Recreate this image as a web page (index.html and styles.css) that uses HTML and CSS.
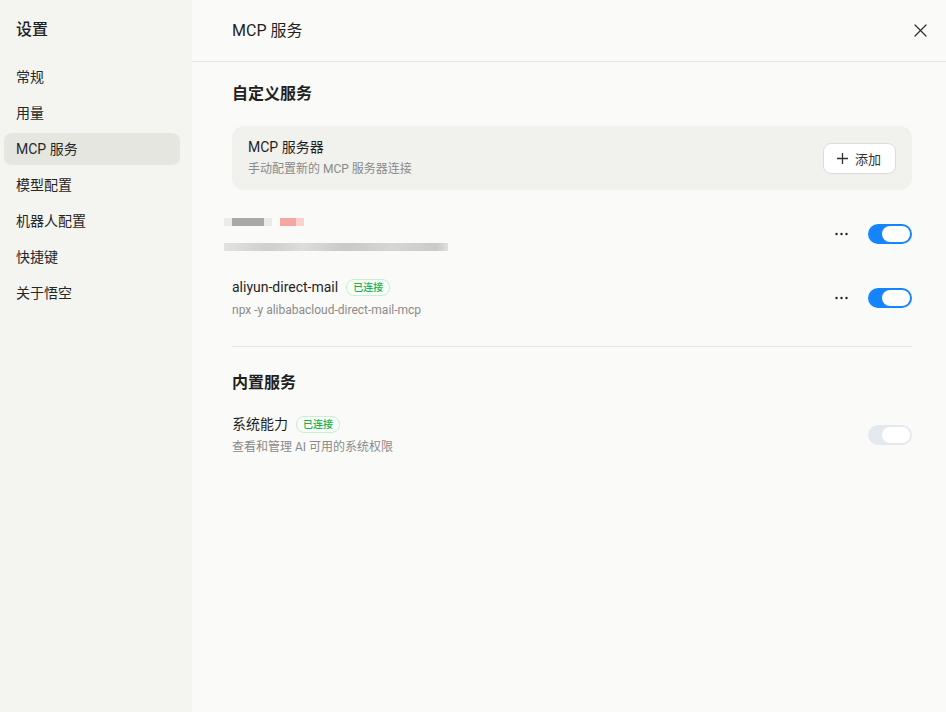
FILE: index.html
```html
<!DOCTYPE html>
<html lang="zh-CN">
<head>
  <meta charset="UTF-8">
  <meta name="viewport" content="width=device-width, initial-scale=1.0">
  <link rel="stylesheet" href="styles.css">
  <title>设置</title>
</head>
<body>
  <aside class="sidebar">
    <h1 class="sidebar-title">设置</h1>
    <nav class="nav">
      <a class="nav-item">常规</a>
      <a class="nav-item">用量</a>
      <a class="nav-item active">MCP 服务</a>
      <a class="nav-item">模型配置</a>
      <a class="nav-item">机器人配置</a>
      <a class="nav-item">快捷键</a>
      <a class="nav-item">关于悟空</a>
    </nav>
  </aside>

  <main class="main">
    <header class="header">
      <h2>MCP 服务</h2>
      <button class="close" aria-label="关闭">
        <svg width="13" height="13" viewBox="0 0 13 13" fill="none" stroke="#333" stroke-width="1.3" stroke-linecap="round">
          <path d="M1 1l11 11M12 1L1 12"/>
        </svg>
      </button>
    </header>

    <div class="content">
      <h3 class="section-title">自定义服务</h3>

      <div class="card">
        <div>
          <div class="card-title">MCP 服务器</div>
          <div class="card-desc">手动配置新的 MCP 服务器连接</div>
        </div>
        <button class="add-btn">
          <svg width="11" height="11" viewBox="0 0 11 11" stroke="#333" stroke-width="1.3">
            <path d="M5.5 0v11M0 5.5h11"/>
          </svg>
          添加
        </button>
      </div>

      <div class="server">
        <div class="blurred">
          <div class="blur-line">
            <span class="px" style="width:8px;background:#ebebeb"></span>
            <span class="px" style="width:32px;background:#a9a9a9"></span>
            <span class="px" style="width:8px;background:#eaeaea"></span>
            <span class="px" style="width:8px;background:transparent"></span>
            <span class="px" style="width:16px;background:#f6a7a4"></span>
            <span class="px" style="width:8px;background:#fbd1cf"></span>
          </div>
          <div class="blur-line low">
            <span class="px" style="width:224px;background:linear-gradient(90deg,#e2e2e2,#cfcfcf 20%,#dcdcdc 35%,#c9c9c9 55%,#d6d6d6 75%,#cacaca 95%,#e0e0e0)"></span>
          </div>
        </div>
        <div class="actions">
          <svg class="more" width="13" height="4" viewBox="0 0 13 4" fill="#222">
            <circle cx="1.5" cy="2" r="1.2"/>
            <circle cx="6.5" cy="2" r="1.2"/>
            <circle cx="11.5" cy="2" r="1.2"/>
          </svg>
          <span class="toggle on"><span class="knob"></span></span>
        </div>
      </div>

      <div class="server">
        <div class="server-text">
          <div class="server-name">aliyun-direct-mail <span class="badge">已连接</span></div>
          <div class="server-cmd">npx -y alibabacloud-direct-mail-mcp</div>
        </div>
        <div class="actions">
          <svg class="more" width="13" height="4" viewBox="0 0 13 4" fill="#222">
            <circle cx="1.5" cy="2" r="1.2"/>
            <circle cx="6.5" cy="2" r="1.2"/>
            <circle cx="11.5" cy="2" r="1.2"/>
          </svg>
          <span class="toggle on"><span class="knob"></span></span>
        </div>
      </div>

      <hr class="divider">

      <h3 class="section-title">内置服务</h3>

      <div class="server builtin">
        <div>
          <div class="server-name">系统能力 <span class="badge">已连接</span></div>
          <div class="server-cmd">查看和管理 AI 可用的系统权限</div>
        </div>
        <div class="actions">
          <span class="toggle disabled"><span class="knob"></span></span>
        </div>
      </div>
    </div>
  </main>
</body>
</html>
```

FILE: styles.css
```css
*, *::before, *::after {
  margin: 0;
  padding: 0;
  box-sizing: border-box;
}

body {
  display: flex;
  height: 712px;
  overflow: hidden;
  font-family: Roboto, "Noto Sans CJK SC", sans-serif;
  color: #1f1f1f;
  background: #fafaf8;
}

.sidebar {
  width: 192px;
  flex-shrink: 0;
  background: #f4f4f0;
  padding: 0 12px 0 4px;
}

.sidebar-title {
  font-size: 16px;
  font-weight: 500;
  line-height: 22px;
  padding: 19px 12px 0;
  margin-bottom: 20px;
}

.nav {
  display: flex;
  flex-direction: column;
  gap: 4px;
}

.nav-item {
  display: block;
  height: 32px;
  line-height: 32px;
  padding: 0 12px;
  font-size: 14px;
  color: #262626;
  border-radius: 8px;
}

.nav-item.active {
  background: #e6e6e1;
}

.main {
  flex: 1;
  display: flex;
  flex-direction: column;
}

.header {
  height: 62px;
  display: flex;
  align-items: center;
  justify-content: space-between;
  padding: 0 16px 0 40px;
  border-bottom: 1px solid #e6e6e3;
}

.header h2 {
  font-size: 16px;
  font-weight: 400;
  margin-top: -3px;
}

.close {
  border: none;
  background: none;
  width: 20px;
  height: 20px;
  display: flex;
  align-items: center;
  justify-content: center;
  margin-top: -1px;
}

.content {
  padding: 21px 34px 0 40px;
}

.section-title {
  font-size: 16px;
  font-weight: 700;
  line-height: 22px;
  margin-bottom: 21px;
}

.card {
  height: 64px;
  background: #f1f1ed;
  border-radius: 12px;
  padding: 0 16px;
  display: flex;
  align-items: center;
  justify-content: space-between;
}

.card-title {
  font-size: 14px;
  line-height: 20px;
  margin-top: -2px;
}

.card-desc {
  font-size: 12px;
  color: #8a8a8a;
  line-height: 18px;
  margin-top: 3px;
}

.add-btn {
  height: 31px;
  padding: 0 14px 0 13px;
  background: #fff;
  border: 1px solid #dcdcd8;
  border-radius: 8px;
  font-family: inherit;
  font-size: 13px;
  color: #333;
  display: flex;
  align-items: center;
  gap: 7px;
}

.server {
  display: flex;
  align-items: center;
  justify-content: space-between;
  height: 64px;
  margin-top: 9px;
}

.server + .server {
  margin-top: 0;
}

.blurred {
  margin-left: -8px;
  margin-top: 7px;
}

.blur-line {
  display: flex;
  height: 8px;
}

.blur-line.low {
  margin-top: 17px;
}

.px {
  height: 8px;
  display: block;
}

.server-text {
  margin-top: 6px;
}

.server-name {
  font-size: 14px;
  line-height: 20px;
  display: flex;
  align-items: center;
  gap: 8px;
}

.badge {
  font-size: 10px;
  font-weight: 500;
  line-height: 15px;
  color: #22b04b;
  border: 1px solid #c8efd3;
  background: #f7fdf9;
  border-radius: 8px;
  padding: 0 6px;
}

.server-cmd {
  font-size: 12px;
  color: #8a8a8a;
  line-height: 18px;
  margin-top: 4px;
}

.actions {
  display: flex;
  align-items: center;
  gap: 20px;
  margin-top: 6px;
}

.more {
  display: block;
}

.toggle {
  width: 44px;
  height: 20px;
  border-radius: 10px;
  padding: 2px;
  display: flex;
  justify-content: flex-end;
}

.toggle.on {
  background: #1684fc;
}

.toggle.disabled {
  background: #e4e9f0;
}

.knob {
  width: 28px;
  height: 16px;
  border-radius: 8px;
  background: #fff;
}

.divider {
  border: none;
  border-top: 1px solid #e6e6e3;
  margin: 19px 0 25px;
}

.builtin {
  height: auto;
  margin-top: 0;
}

.builtin > div:first-child {
  margin-top: -1px;
}

.builtin .actions {
  margin-top: -1px;
}
```
